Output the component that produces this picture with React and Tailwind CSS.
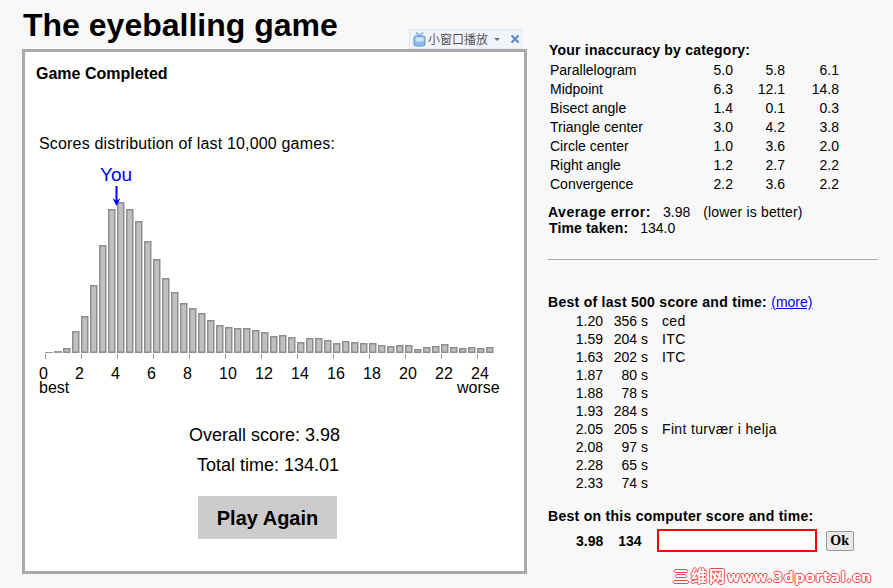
import React from "react";

const SANS = "font-['Liberation_Sans',Arial,sans-serif]";

// top edge (page y) of every histogram bar, read off the picture
const barTops = [
  352, 351, 348, 331, 316, 285, 245, 209, 202, 209, 221, 241, 259, 278, 292, 303, 308,
  313, 320, 325, 327, 328, 328, 330, 332, 336, 335, 337, 342, 338, 338, 340, 343, 341,
  342, 343, 343, 345, 346, 345, 345, 349, 347, 346, 344, 347, 348, 347, 348, 347,
];

const categories = [
  ["Parallelogram", "5.0", "5.8", "6.1"],
  ["Midpoint", "6.3", "12.1", "14.8"],
  ["Bisect angle", "1.4", "0.1", "0.3"],
  ["Triangle center", "3.0", "4.2", "3.8"],
  ["Circle center", "1.0", "3.6", "2.0"],
  ["Right angle", "1.2", "2.7", "2.2"],
  ["Convergence", "2.2", "3.6", "2.2"],
];

const bestScores = [
  ["1.20", "356 s", "ced"],
  ["1.59", "204 s", "ITC"],
  ["1.63", "202 s", "ITC"],
  ["1.87", "80 s", ""],
  ["1.88", "78 s", ""],
  ["1.93", "284 s", ""],
  ["2.05", "205 s", "Fint turvær i helja"],
  ["2.08", "97 s", ""],
  ["2.28", "65 s", ""],
  ["2.33", "74 s", ""],
];

const Histogram = () => (
  <svg
    width="470"
    height="240"
    viewBox="36 160 470 240"
    className="block"
    fontFamily="'Liberation Sans', Arial, sans-serif"
  >
    {barTops.map((top, i) =>
      i < 2 ? (
        // the first two bars are so short that only their outline shows
        <rect key={i} x={45 + i * 9} y={top} width="8" height={353 - top} fill="#999" />
      ) : (
        <rect
          key={i}
          x={45.75 + i * 9}
          y={top + 0.75}
          width="6"
          height={351.5 - top}
          fill="#c0c0c0"
          stroke="#8e8e8e"
          strokeWidth="1.5"
        />
      )
    )}
    {Array.from({ length: 13 }, (_, k) => (
      <g key={k}>
        <line x1={45.5 + k * 36} x2={45.5 + k * 36} y1="354" y2="359" stroke="#999" />
        <text x={39 + k * 36} y="379" fontSize="16" fill="#000">
          {k * 2}
        </text>
      </g>
    ))}
    <text x="39" y="393" fontSize="16" fill="#000">best</text>
    <text x="457" y="393" fontSize="16" fill="#000">worse</text>
    <text x="100" y="181" fontSize="19" fill="#0000ee">You</text>
    <line x1="116.5" x2="116.5" y1="186" y2="203" stroke="#0000ee" strokeWidth="2" />
    <path d="M112.5 198 L116.5 206 L120.5 198 L116.5 201 Z" fill="#0000ee" />
  </svg>
);

const PopupBar = () => (
  <div className="absolute left-[409px] top-[29px] flex h-5 w-[113px] items-center border border-[#dfe8f4] bg-[#f0f4fc] pl-[3px] text-xs text-[#555] font-['Noto_Sans_CJK_SC',sans-serif]">
    <svg width="13" height="15" viewBox="0 0 13 15" className="shrink-0">
      <path d="M3 0.5 L6.5 4 L10 0.5" fill="none" stroke="#6b9fd4" strokeWidth="1.2" />
      <rect x="1" y="4" width="11" height="10" rx="1.5" fill="#8fbce6" stroke="#5f95cc" />
      <rect x="2.5" y="5.5" width="8" height="4" fill="#cfe3f6" />
    </svg>
    <span className="ml-[2px] leading-none">小窗口播放</span>
    <svg width="6" height="3" viewBox="0 0 6 3" className="ml-[6px] shrink-0">
      <path d="M0 0 H6 L3 3 Z" fill="#777" />
    </svg>
    <svg width="10" height="10" viewBox="0 0 10 10" className="ml-[10px] shrink-0">
      <path d="M1.5 1.5 L8.5 8.5 M8.5 1.5 L1.5 8.5" stroke="#5b8fc7" strokeWidth="2.2" />
    </svg>
  </div>
);

const GamePanel = () => (
  <div className="relative pl-[22px]">
    <h1 className="h-[49px] pl-px text-[32px] leading-[50px] font-bold text-black">The eyeballing game</h1>
    <PopupBar />
    <div className="h-[525px] w-[505px] border-[3px] border-[#aaa] bg-white">
      <div className="pt-[13px] pl-[11px] text-base leading-[18px] font-bold">Game Completed</div>
      <div className="pt-[52px] pl-[14px] text-base leading-[18px] tracking-[0.17px]">Scores distribution of last 10,000 games:</div>
      <div className="pt-[7px] pl-[11px]">
        <Histogram />
      </div>
      <div className="flex flex-col items-end pt-[20px] pr-[184px] text-lg">
        <div className="leading-[30px]">Overall score: 3.98</div>
        <div className="mr-px leading-[30px]">Total time: 134.01</div>
      </div>
      <button className="mt-[16px] ml-[173px] block h-[43px] w-[139px] bg-[#ccc] text-xl font-bold">Play Again</button>
    </div>
  </div>
);

const SidePanel = () => (
  <div className="relative ml-[21px] w-[330px] text-sm">
    <div className="pt-[41px] pl-px leading-[18px] font-bold tracking-[0.22px]">Your inaccuracy by category:</div>
    <div className="mt-[2px] grid grid-cols-[143px_40px_52px_54px] pl-[2px] leading-[19px]">
      {categories.map((row) => (
        <React.Fragment key={row[0]}>
          <div>{row[0]}</div>
          <div className="text-right">{row[1]}</div>
          <div className="text-right">{row[2]}</div>
          <div className="text-right">{row[3]}</div>
        </React.Fragment>
      ))}
    </div>
    <div className="mt-[10px] leading-[16px]">
      <span className="font-bold tracking-[0.5px]">Average error:</span>
      <span className="ml-[12px]">3.98</span>
      <span className="ml-[13px] tracking-[0.17px]">(lower is better)</span>
    </div>
    <div className="pl-px leading-[16px]">
      <span className="font-bold tracking-[0.15px]">Time taken:</span>
      <span className="ml-[12px]">134.0</span>
    </div>
    <hr className="mt-[23px] border-t border-[#aaa]" />
    <div className="mt-[33px] leading-[18px]">
      <span className="font-bold tracking-[0.28px]">Best of last 500 score and time: </span>
      <a href="#more" className="text-[#0000ee] underline">(more)</a>
    </div>
    <div className="mt-px grid grid-cols-[55px_45px_1fr] leading-[18px]">
      {bestScores.map((row) => (
        <React.Fragment key={row[0]}>
          <div className="text-right">{row[0]}</div>
          <div className="text-right">{row[1]}</div>
          <div className="pl-[14px] tracking-[0.35px]">{row[2]}</div>
        </React.Fragment>
      ))}
    </div>
    <div className="mt-[15px] leading-[18px] font-bold tracking-[0.28px]">Best on this computer score and time:</div>
    <div className="mt-[4px] flex items-center font-bold">
      <span className="ml-[28px]">3.98</span>
      <span className="ml-[15px]">134</span>
      <div className="ml-[15px] h-[23px] w-[160px] border-2 border-[#f00] bg-white" />
      <button className="ml-[9px] h-[20px] w-[28px] rounded-[2px] border border-[#999] bg-[#e8e8e8] text-[14px] leading-none font-bold font-['Liberation_Serif',serif]">
        Ok
      </button>
    </div>
  </div>
);

export default function App() {
  return (
    <div className={`relative flex h-[588px] w-[893px] overflow-hidden bg-[#f8f8f8] text-black ${SANS}`}>
      <GamePanel />
      <SidePanel />
      <div className="absolute top-[565px] left-[673px] flex items-center text-[14px] leading-[18px] font-bold whitespace-nowrap text-white [text-shadow:1px_0_#f04848,-1px_0_#f04848,0_1px_#f04848,0_-1px_#f04848] font-['DejaVu_Sans','Noto_Sans_CJK_SC',sans-serif]">
        <span className="text-base tracking-[2px]">三维网</span>
        <span className="tracking-[0.73px]">www.3dportal.cn</span>
      </div>
    </div>
  );
}
